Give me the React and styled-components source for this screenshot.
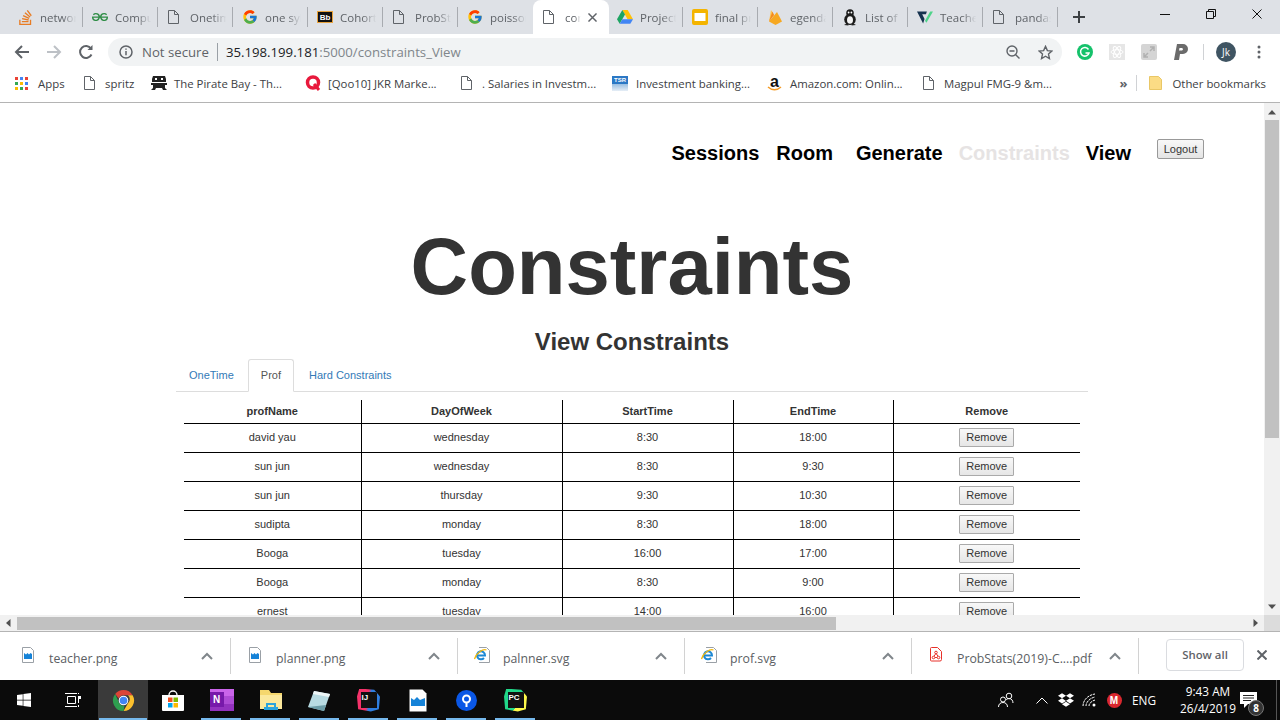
import React from "react";
import styled, { createGlobalStyle } from "styled-components";
import { FaWindows, FaDropbox } from "react-icons/fa";
import { FcGoogle } from "react-icons/fc";
import { SiStackoverflow, SiGeeksforgeeks } from "react-icons/si";

const GlobalStyle = createGlobalStyle`
  html, body {
    margin: 0;
    padding: 0;
    height: 720px;
    overflow: hidden;
    background: #fff;
    font-family: "Open Sans", "Noto Sans", sans-serif;
  }
  * { box-sizing: border-box; }
`;

const Screen = styled.div`
  width: 1280px;
  height: 720px;
  display: flex;
  flex-direction: column;
  overflow: hidden;
`;

/* ---------- browser chrome ---------- */

const TabStrip = styled.div`
  height: 34px;
  flex: none;
  background: #dee1e6;
  display: flex;
  padding-left: 8px;
`;

const Tab = styled.div`
  position: relative;
  width: ${props => (props.$active ? 76 : 75)}px;
  flex: none;
  display: flex;
  align-items: center;
  gap: 7px;
  padding-left: 9px;
  background: ${props => (props.$active ? "#fff" : "transparent")};
  border-radius: 8px 8px 0 0;
  margin-right: ${props => (props.$active ? -1 : 0)}px;
  z-index: ${props => (props.$active ? 1 : 0)};
  &::after {
    content: "";
    display: ${props => (props.$noSep ? "none" : "block")};
    position: absolute;
    right: 0;
    top: 7px;
    height: 20px;
    width: 1px;
    background: #a8abb0;
  }
`;

const TabIcon = styled.span`
  width: 16px;
  height: 16px;
  flex: none;
  display: flex;
  align-items: center;
  justify-content: center;
`;

const TabTitle = styled.span`
  width: ${props => (props.$active ? 16 : 37)}px;
  flex: none;
  overflow: hidden;
  white-space: nowrap;
  font-size: 11.5px;
  color: #5f6368;
  -webkit-mask-image: linear-gradient(to right, #000 60%, transparent 98%);
  mask-image: linear-gradient(to right, #000 60%, transparent 98%);
`;

const TabClose = styled.span`
  display: flex;
`;

const NewTab = styled.div`
  width: 28px;
  margin-left: 7px;
  display: flex;
  align-items: center;
  justify-content: center;
`;

const WindowControls = styled.div`
  margin-left: auto;
  display: flex;
`;

const WindowButton = styled.div`
  width: 46px;
  height: 28px;
  display: flex;
  align-items: center;
  justify-content: center;
`;

const Toolbar = styled.div`
  height: 36px;
  flex: none;
  background: #fff;
  display: flex;
  align-items: center;
  padding: 0 5px 0 6px;
`;

const ToolButton = styled.div`
  width: 32px;
  height: 32px;
  flex: none;
  display: flex;
  align-items: center;
  justify-content: center;
  margin-left: ${props => props.$ml || 0}px;
`;

const Omnibox = styled.div`
  flex: 1;
  height: 28px;
  margin: 0 7px 0 6px;
  border-radius: 14px;
  background: #f1f3f4;
  display: flex;
  align-items: center;
  padding-left: 11px;
  font-size: 13.2px;
`;

const NotSecure = styled.span`
  margin-left: 9px;
  color: #5f6368;
`;

const OmniDivider = styled.span`
  width: 1px;
  height: 18px;
  background: #9aa0a6;
  margin: 0 8px;
`;

const Host = styled.span`
  color: #202124;
`;

const UrlRest = styled.span`
  color: #80868b;
`;

const OmniRight = styled.div`
  margin-left: auto;
  padding-right: 1px;
  display: flex;
  align-items: center;
`;

const ToolDivider = styled.span`
  width: 1px;
  height: 16px;
  background: #d0d2d5;
  margin: 0 6px;
  flex: none;
`;

const Avatar = styled.div`
  width: 20px;
  height: 20px;
  border-radius: 50%;
  background: #3f5462;
  color: #fff;
  font-size: 10px;
  display: flex;
  align-items: center;
  justify-content: center;
`;

const BookmarkBar = styled.div`
  height: 33px;
  flex: none;
  background: #fff;
  border-bottom: 1px solid #b4b4b4;
  display: flex;
  align-items: center;
  padding: 0 0 6px 15px;
  font-size: 11.4px;
  color: #3c4043;
`;

const Bookmark = styled.div`
  width: ${props => props.$w}px;
  flex: none;
  display: flex;
  align-items: center;
  gap: ${props => props.$gap}px;
  white-space: nowrap;
`;

const BookmarkEnd = styled.div`
  margin-left: auto;
  display: flex;
  align-items: center;
  padding-right: 14px;
`;

const Chevrons = styled.span`
  font-size: 13px;
  color: #5f6368;
  font-weight: 700;
`;

const EndDivider = styled.span`
  width: 1px;
  height: 16px;
  background: #d0d2d5;
  margin: 0 12px 0 9px;
`;

const OtherLabel = styled.span`
  margin-left: 10px;
`;

/* ---------- page ---------- */

const Viewport = styled.div`
  height: 512px;
  flex: none;
  display: flex;
`;

const Page = styled.div`
  flex: 1;
  min-width: 0;
  overflow: hidden;
  background: #fff;
  font-family: "Liberation Sans", Arial, sans-serif;
  color: #333;
`;

const Header = styled.div`
  display: flex;
  justify-content: flex-end;
  padding: 36px 60px 0 0;
`;

const NavLink = styled.a`
  font-size: 20px;
  font-weight: 700;
  line-height: 28px;
  margin: 0 ${props => props.$gap || 16}px 0 0;
  color: ${props => (props.$current ? "#e6e3e3" : "#000")};
`;

const LogoutButton = styled.button`
  width: 47px;
  height: 20px;
  margin-left: 10px;
  padding: 0;
  font: 11px "Liberation Sans", Arial, sans-serif;
  color: #333;
  border: 1px solid #999;
  border-radius: 2px;
  background: linear-gradient(#f8f8f8, #e4e4e4);
`;

const Title = styled.h1`
  margin: 56px 0 0;
  font-size: 79.7px;
  line-height: 88px;
  font-weight: 700;
  text-align: center;
`;

const SubTitle = styled.h2`
  margin: 18px 0 0;
  font-size: 24px;
  line-height: 26px;
  font-weight: 700;
  text-align: center;
`;

const Content = styled.div`
  width: 912px;
  margin: 0 auto;
`;

const TabsRow = styled.div`
  display: flex;
  margin-top: 4px;
  border-bottom: 1px solid #ddd;
  height: 33px;
`;

const PageTab = styled.a`
  height: 33px;
  padding: 0 12px;
  margin: 0 ${props => props.$mr || 0}px 0 0;
  font-size: 11px;
  line-height: 31px;
  color: ${props => (props.$active ? "#555" : "#337ab7")};
  border: 1px solid ${props => (props.$active ? "#ddd" : "transparent")};
  border-bottom-color: ${props => (props.$active ? "#fff" : "transparent")};
  border-radius: 3px 3px 0 0;
  background: ${props => (props.$active ? "#fff" : "transparent")};
`;

const Table = styled.table`
  width: 896px;
  margin: 8px 8px 0;
  border-collapse: collapse;
  table-layout: fixed;
  font-size: 11px;
`;

const Th = styled.th`
  height: 23px;
  padding: 0;
  font-weight: 700;
  text-align: center;
  border-bottom: 1px solid #000;
  border-left: 1px solid #000;
  &:first-child { border-left: 0; }
`;

const Td = styled.td`
  height: 29px;
  padding: 0 0 1px;
  text-align: center;
  border-bottom: 1px solid #000;
  border-left: 1px solid #000;
  &:first-child { border-left: 0; }
`;

const RemoveButton = styled.button`
  display: block;
  width: 55px;
  height: 19px;
  margin: 0 auto;
  padding: 0;
  font: 11px "Liberation Sans", Arial, sans-serif;
  color: #333;
  border: 1px solid #aaa;
  border-radius: 1px;
  background: linear-gradient(#f8f8f8, #e6e6e6);
`;

const VBar = styled.div`
  width: 16px;
  flex: none;
  background: #f1f1f1;
  display: flex;
  flex-direction: column;
  align-items: center;
`;

const ArrowCell = styled.div`
  width: 16px;
  height: ${props => props.$h || 17}px;
  flex: none;
  display: flex;
  align-items: center;
  justify-content: center;
  margin-top: ${props => (props.$bottom ? "auto" : 0)};
  margin-left: ${props => (props.$right ? "auto" : 0)};
`;

const VThumb = styled.div`
  width: 14px;
  height: 318px;
  background: #c1c1c1;
`;

const HBar = styled.div`
  height: 16px;
  flex: none;
  background: #f1f1f1;
  display: flex;
  align-items: center;
`;

const HThumb = styled.div`
  width: 819px;
  height: 13px;
  margin-left: 1px;
  background: #c1c1c1;
`;

const Corner = styled.div`
  width: 16px;
  height: 16px;
  background: #dcdcdc;
`;

/* ---------- downloads ---------- */

const DownloadBar = styled.div`
  height: 49px;
  flex: none;
  background: #fff;
  border-top: 1px solid #b4b4b4;
  display: flex;
  align-items: center;
`;

const Download = styled.div`
  position: relative;
  width: ${props => props.$w || 227}px;
  height: 36px;
  flex: none;
  display: flex;
  align-items: center;
  border-right: 1px solid #d2d2d2;
  padding: 4px 0 0 ${props => props.$pad || 18}px;
`;

const FileIcon = styled.span`
  width: 14px;
  height: 16px;
  flex: none;
  margin: -6px 13px 0 0;
  display: flex;
`;

const FileName = styled.span`
  font-size: 12.3px;
  color: #5b5e63;
  white-space: nowrap;
`;

const Caret = styled.span`
  position: absolute;
  right: 15px;
  top: 10px;
  display: flex;
`;

const ShowAll = styled.div`
  width: 78px;
  height: 32px;
  margin: -3px 0 0 27px;
  flex: none;
  border: 1px solid #dadce0;
  border-radius: 4px;
  font-size: 11.4px;
  font-weight: 600;
  color: #5f6368;
  display: flex;
  align-items: center;
  justify-content: center;
`;

const CloseBar = styled.span`
  margin: -2px 0 0 13px;
  display: flex;
`;

/* ---------- taskbar ---------- */

const Taskbar = styled.div`
  height: 40px;
  flex: none;
  background: #0b0b0b;
  display: flex;
  color: #fff;
`;

const TaskItem = styled.div`
  position: relative;
  width: ${props => props.$w || 49}px;
  flex: none;
  display: flex;
  align-items: center;
  justify-content: center;
  background: ${props => (props.$active ? "#3a3a3a" : "transparent")};
  &::after {
    content: "";
    display: ${props => (props.$open ? "block" : "none")};
    position: absolute;
    left: ${props => (props.$active ? 1 : 4)}px;
    right: ${props => (props.$active ? 1 : 5)}px;
    bottom: 0;
    height: 2px;
    background: #76b9ed;
  }
`;

const Tray = styled.div`
  margin-left: auto;
  display: flex;
  align-items: center;
  font-size: 11.8px;
  padding-right: 3px;
`;

const TrayIcon = styled.span`
  display: flex;
  align-items: center;
  justify-content: center;
  width: ${props => props.$w || 24}px;
  margin-right: ${props => props.$mr || 0}px;
`;

const Clock = styled.div`
  width: 60px;
  margin-left: 16px;
  text-align: center;
  line-height: 17px;
  white-space: nowrap;
`;

const Notify = styled.div`
  position: relative;
  align-self: stretch;
  width: 38px;
  padding: 12px 0 0 2px;
`;

const NotifyBadge = styled.span`
  position: absolute;
  left: 10px;
  top: 20px;
  width: 16px;
  height: 16px;
  border-radius: 50%;
  background: #333;
  border: 1px solid #777;
  font-size: 10px;
  font-weight: 700;
  display: flex;
  align-items: center;
  justify-content: center;
`;

const ShowDesktop = styled.span`
  width: 1px;
  height: 40px;
  background: #555;
`;

/* ---------- icons ---------- */

const DocGlyph = styled.svg`
  flex: none;
  margin-left: ${props => props.$nudge || 0}px;
`;

const Doc = ({ nudge }) => (
  <DocGlyph $nudge={nudge} width="11" height="14" viewBox="0 0 11 14" fill="none" stroke="#5f6368">
    <path d="M.5.500h6l4 4v9H.5z M6.500.500V4.500H10.500" />
  </DocGlyph>
);

const Bb = styled.span`
  width: 16px;
  height: 12px;
  background: #111;
  border: 1px solid #e8a33d;
  color: #fff;
  font: 700 8px "Liberation Sans", sans-serif;
  display: flex;
  align-items: center;
  justify-content: center;
`;

const Drive = () => (
  <svg width="16" height="16" viewBox="0 0 16 14">
    <path d="M5.300 0h5.400l5.300 9.200h-5.400z" fill="#ffc107" />
    <path d="M5.300 0L0 9.200l2.700 4.600L8 4.600z" fill="#1da462" />
    <path d="M5.300 9.200H16l-2.700 4.600H2.700z" fill="#4285f4" />
  </svg>
);

const Slides = () => (
  <svg width="16" height="16" viewBox="0 0 16 16">
    <rect width="16" height="16" rx="2" fill="#f4b400" />
    <rect x="2.500" y="4" width="11" height="8" fill="#fff" />
  </svg>
);

const Firebase = () => (
  <svg width="13" height="16" viewBox="0 0 13 16">
    <path d="M0 12.500L2 1l3 5z" fill="#ffc24a" />
    <path d="M0 12.500L8 3l5 9.500-6.500 3.500z" fill="#f6a821" />
    <path d="M0 12.500L5 6 3.500 2.500z" fill="#f58a1f" />
  </svg>
);

const Penguin = () => (
  <svg width="14" height="17" viewBox="0 0 14 17">
    <circle cx="7" cy="4" r="3.800" fill="#1b1b1b" />
    <ellipse cx="7" cy="10.500" rx="5.800" ry="5.500" fill="#1b1b1b" />
    <ellipse cx="7" cy="11" rx="3" ry="3.800" fill="#f3f3f3" />
    <circle cx="5.600" cy="3.500" r=".9" fill="#fff" />
    <circle cx="8.400" cy="3.500" r=".9" fill="#fff" />
    <path d="M1 16l3.500-2 1 2.500zM13 16l-3.500-2-1 2.500z" fill="#222" />
  </svg>
);

const Teachable = () => (
  <svg width="17" height="15" viewBox="0 0 17 15">
    <path d="M0 1h10.500L9.500 4H5.500l2.500 5-1.500 5z" fill="#16324f" />
    <path d="M8.500 11L14 1h3L10 13z" fill="#4fd48a" />
  </svg>
);

const AppsGrid = () => (
  <svg width="13" height="13" viewBox="0 0 13 13">
    {[0, 5, 10].flatMap((y, r) =>
      [0, 5, 10].map((x, c) => (
        <rect
          key={`${r}${c}`}
          x={x}
          y={y}
          width="3"
          height="3"
          fill={[["#ea4335", "#4285f4", "#ea4335"], ["#34a853", "#fbbc05", "#4285f4"], ["#fbbc05", "#34a853", "#ea4335"]][r][c]}
        />
      ))
    )}
  </svg>
);

const Pirate = () => (
  <svg width="16" height="14" viewBox="0 0 16 14" fill="#222">
    <path d="M2 0h12l1 3v3H1V3z" />
    <path d="M0 7h16v2h-2v3l2 2h-4l-1-2H5l-1 2H0l2-2V9H0z" />
    <rect x="4" y="2" width="2" height="2" fill="#fff" />
    <rect x="10" y="2" width="2" height="2" fill="#fff" />
  </svg>
);

const Qoo = () => (
  <svg width="16" height="16" viewBox="0 0 16 16" fill="none">
    <circle cx="8" cy="7.500" r="5.500" stroke="#e8193c" strokeWidth="3.500" />
    <path d="M9 9l5 6" stroke="#e8193c" strokeWidth="3" />
  </svg>
);

const Tsr = styled.span`
  width: 16px;
  height: 15px;
  flex: none;
  background: linear-gradient(#2b78c5 55%, #9cc0e2 55%, #e6eef6);
  color: #fff;
  font: 700 6px "Liberation Sans", sans-serif;
  text-align: center;
  line-height: 8px;
`;

const AmazonBox = styled.span`
  position: relative;
  width: 15px;
  height: 16px;
  flex: none;
  color: #111;
  font: 700 16px/13px "Liberation Sans", sans-serif;
  text-align: center;
`;

const AmazonSmile = styled.svg`
  position: absolute;
  left: 0;
  bottom: 0;
`;

const AmazonIcon = () => (
  <AmazonBox>
    a
    <AmazonSmile width="15" height="5" viewBox="0 0 15 5" fill="none" stroke="#f59a23" strokeWidth="1.500">
      <path d="M1 1c4 3.500 9 3.500 13 0" />
    </AmazonSmile>
  </AmazonBox>
);

const Folder = () => (
  <svg width="13" height="14" viewBox="0 0 13 14">
    <path d="M.5.500h9l3 3v10H.5z" fill="#fbdc85" stroke="#e9c766" />
  </svg>
);

const CaretUp = () => (
  <svg width="16" height="16" viewBox="0 0 16 16" fill="none" stroke="#80868b" strokeWidth="2">
    <path d="M3 11l5-5 5 5" />
  </svg>
);

const Cross = ({ size = 10, color = "#5f6368", width = 1.600 }) => (
  <svg width={size} height={size} viewBox="0 0 10 10" stroke={color} strokeWidth={width}>
    <path d="M.5.500l9 9M9.500.500l-9 9" />
  </svg>
);

const PngIcon = () => (
  <svg width="12" height="16" viewBox="0 0 12 16">
    <path d="M.5.500h8l3 3v12H.5z" fill="#fff" stroke="#9aa0a6" />
    <rect x="2" y="4" width="8" height="8" fill="#1683d8" />
    <path d="M2 6l2 1.500L5.500 6 7 7.500 8.500 6 10 7V4H2z" fill="#fff" />
  </svg>
);

const SvgGlyph = styled.svg`
  flex: none;
  margin-left: -2px;
`;

const SvgIcon = () => (
  <SvgGlyph width="16" height="16" viewBox="0 0 16 16" fill="none">
    <path d="M5 .500h7.500l3 3v12H5" fill="#fff" stroke="#9aa0a6" />
    <path d="M3.500 8.500h7.500A4 4 0 1 0 10 11" stroke="#1c88d4" strokeWidth="2" />
    <path d="M.5 12C2 6 9 1.500 12.500 3" stroke="#f2b90f" strokeWidth="1.200" />
  </SvgGlyph>
);

const PdfIcon = () => (
  <svg width="12" height="15" viewBox="0 0 12 15" fill="none" stroke="#e8312a" strokeWidth="1">
    <path d="M1.500.500h6l4 4v8a1.500 1.500 0 0 1-1.500 1.500H1.500A1 1 0 0 1 .5 13V1.500a1 1 0 0 1 1-1z" />
    <circle cx="6" cy="5.500" r="1.300" />
    <circle cx="3.500" cy="10.500" r="1.300" />
    <circle cx="8.500" cy="10.500" r="1.300" />
    <path d="M5.500 7l-1.500 2.300M6.500 7L8 9.300M5 10.500h2" />
  </svg>
);

const ChromeLogo = () => (
  <svg width="23" height="23" viewBox="0 0 24 24">
    <path d="M12 1a11 11 0 0 1 9.530 5.500H12a5.500 5.500 0 0 0-5 3.300L3.300 5.300A11 11 0 0 1 12 1z" fill="#db4437" />
    <path d="M21.530 6.500A11 11 0 0 1 12 23l4.700-8.200a5.500 5.500 0 0 0 0-8.300z" fill="#fbc02d" />
    <path d="M3.300 5.300L7.600 14.800a5.500 5.500 0 0 0 5.400 2.600L12 23A11 11 0 0 1 3.300 5.300z" fill="#2e9e4f" />
    <circle cx="12" cy="12" r="5" fill="#fff" />
    <circle cx="12" cy="12" r="4" fill="#4285f4" />
  </svg>
);

const StoreIcon = () => (
  <svg width="24" height="24" viewBox="0 0 24 24">
    <path d="M8 7a4 4 0 0 1 8 0" fill="none" stroke="#fff" strokeWidth="1.300" />
    <path d="M1 7h22v15a1 1 0 0 1-1 1H2a1 1 0 0 1-1-1z" fill="#fff" />
    <rect x="7" y="9.500" width="4.500" height="4.500" fill="#f25022" />
    <rect x="12.500" y="9.500" width="4.500" height="4.500" fill="#7fba00" />
    <rect x="7" y="15" width="4.500" height="4.500" fill="#00a4ef" />
    <rect x="12.500" y="15" width="4.500" height="4.500" fill="#ffb900" />
  </svg>
);

const OneNoteBox = styled.span`
  position: relative;
  width: 24px;
  height: 22px;
  display: flex;
  background: linear-gradient(#ca64ea 33%, #ae4bd5 33% 66%, #9332bf 66%);
`;

const OneNoteN = styled.span`
  position: absolute;
  left: 0;
  top: 3px;
  width: 14px;
  height: 15px;
  background: #7719aa;
  color: #fff;
  font: 700 10px "Liberation Sans", sans-serif;
  display: flex;
  align-items: center;
  justify-content: center;
`;

const Explorer = () => (
  <svg width="24" height="20" viewBox="0 0 24 20">
    <path d="M1 0h9l2 3h11v16H1z" fill="#f5d76e" />
    <path d="M1 5h22v14H1z" fill="#fbe89c" />
    <path d="M7 17v-4h10v4h-2v-2H9v2z" fill="#2ba4dd" />
    <rect x="5" y="17" width="14" height="3" fill="#2ba4dd" />
  </svg>
);

const Notes = () => (
  <svg width="24" height="24" viewBox="0 0 24 24">
    <path d="M6 3l16 3-6 17-16-4z" fill="#b8dbe2" />
    <path d="M6 3l16 3-1 3L5 6z" fill="#eef6f7" />
    <path d="M0 19l16 4 2-6z" fill="#6c9da8" />
  </svg>
);

const IdeBox = styled.span`
  width: 23px;
  height: 23px;
  display: flex;
  align-items: center;
  justify-content: center;
  background: ${props => props.$bg};
  clip-path: polygon(10% 0, 75% 5%, 100% 35%, 95% 90%, 60% 100%, 5% 90%, 0 35%);
`;

const IdeCore = styled.span`
  width: 16px;
  height: 16px;
  background: #111;
  color: #fff;
  font: 700 8px "Liberation Sans", sans-serif;
  padding: 1px;
  line-height: 9px;
`;

const PreviewIcon = () => (
  <svg width="18" height="23" viewBox="0 0 18 23">
    <path d="M.5.500h13l4 4v18H.5z" fill="#fff" />
    <rect x="2" y="6" width="14" height="11" fill="#1683d8" />
    <path d="M2 9l3 2 3-3 3 3 5-2V6H2z" fill="#fff" />
  </svg>
);

const SourceTree = () => (
  <svg width="21" height="21" viewBox="0 0 21 21">
    <circle cx="10.500" cy="10.500" r="10.500" fill="#0a57e6" />
    <circle cx="10.500" cy="9" r="3.500" fill="none" stroke="#fff" strokeWidth="2" />
    <rect x="9.500" y="12" width="2" height="5" fill="#fff" />
  </svg>
);

const TaskViewIcon = () => (
  <svg width="16" height="14" viewBox="0 0 16 14" fill="none" stroke="#fff" strokeWidth="1">
    <path d="M2.500 3.500h8v7h-8zM0 .5h12M0 13.500h12M13.500 0v1M13.500 3v7M13.500 12v2" />
    <rect x="13" y="3" width="3" height="3" fill="#fff" stroke="none" />
  </svg>
);

const People = () => (
  <svg width="16" height="16" viewBox="0 0 16 16" fill="none" stroke="#fff" strokeWidth="1">
    <circle cx="5" cy="7.500" r="2.500" />
    <circle cx="11" cy="4" r="2.800" />
    <path d="M.5 15c0-3 2-4.500 4.500-4.500S9.500 12 9.500 15M8 8c1-1 2-1.500 3-1.500 2.500 0 4 2 4 4.500" />
  </svg>
);

const Wifi = () => (
  <svg width="16" height="14" viewBox="0 0 16 14" fill="none" stroke="#fff" strokeWidth="1">
    <path d="M1 13C1 7 6 2 13 1M4 13c0-4 4-8 9-9M7 13c0-3 3-5 6-6" strokeDasharray="2.500 .8" />
    <circle cx="12" cy="12" r="1.500" fill="#fff" stroke="none" />
  </svg>
);

const MegaBadge = styled.span`
  width: 15px;
  height: 15px;
  border-radius: 50%;
  background: #d9272e;
  color: #fff;
  font: 700 10px "Liberation Sans", sans-serif;
  display: flex;
  align-items: center;
  justify-content: center;
`;

const Bubble = () => (
  <svg width="17" height="16" viewBox="0 0 17 16">
    <path d="M0 0h17v12H8l-4 4v-4H0z" fill="#fff" />
    <path d="M3 3.500h11M3 6h11M3 8.500h8" stroke="#222" />
  </svg>
);

const Arrow = ({ d }) => (
  <svg width="8" height="8" viewBox="0 0 8 8" fill="#505050">
    <path d={d} />
  </svg>
);

/* ---------- data ---------- */

const tabs = [
  { icon: <SiStackoverflow size={15} color="#e87c24" />, title: "network" },
  { icon: <SiGeeksforgeeks size={16} color="#2f8d46" />, title: "Computer" },
  { icon: <Doc nudge={-3} />, title: "Onetime" },
  { icon: <FcGoogle size={16} />, title: "one syllabus" },
  { icon: <Bb>Bb</Bb>, title: "Cohort" },
  { icon: <Doc nudge={-3} />, title: "ProbStats" },
  { icon: <FcGoogle size={16} />, title: "poisson", noSep: true },
  { icon: <Doc nudge={-3} />, title: "constraints", active: true, noSep: true },
  { icon: <Drive />, title: "Project" },
  { icon: <Slides />, title: "final project" },
  { icon: <Firebase />, title: "egendary" },
  { icon: <Penguin />, title: "List of" },
  { icon: <Teachable />, title: "Teacher" },
  { icon: <Doc nudge={-3} />, title: "pandas" },
];

const bookmarks = [
  { w: 69, gap: 10, icon: <AppsGrid />, label: "Apps" },
  { w: 67, gap: 10, icon: <Doc />, label: "spritz" },
  { w: 154, gap: 7, icon: <Pirate />, label: "The Pirate Bay - Th..." },
  { w: 156, gap: 7, icon: <Qoo />, label: "[Qoo10] JKR Marke..." },
  { w: 151, gap: 10, icon: <Doc />, label: ". Salaries in Investm..." },
  { w: 155, gap: 8, icon: <Tsr>TSR</Tsr>, label: "Investment banking..." },
  { w: 156, gap: 8, icon: <AmazonIcon />, label: "Amazon.com: Onlin..." },
  { w: 160, gap: 10, icon: <Doc />, label: "Magpul FMG-9 &m..." },
];

const rows = [
  ["david yau", "wednesday", "8:30", "18:00"],
  ["sun jun", "wednesday", "8:30", "9:30"],
  ["sun jun", "thursday", "9:30", "10:30"],
  ["sudipta", "monday", "8:30", "18:00"],
  ["Booga", "tuesday", "16:00", "17:00"],
  ["Booga", "monday", "8:30", "9:00"],
  ["ernest", "tuesday", "14:00", "16:00"],
];

const downloads = [
  { icon: <PngIcon />, name: "teacher.png", w: 231, pad: 22 },
  { icon: <PngIcon />, name: "planner.png" },
  { icon: <SvgIcon />, name: "palnner.svg" },
  { icon: <SvgIcon />, name: "prof.svg" },
  { icon: <PdfIcon />, name: "ProbStats(2019)-C....pdf" },
];

const App = () => (
  <Screen>
    <GlobalStyle />
    <TabStrip>
      {tabs.map(tab => (
        <Tab key={tab.title} $active={tab.active} $noSep={tab.noSep}>
          <TabIcon>{tab.icon}</TabIcon>
          <TabTitle $active={tab.active}>{tab.title}</TabTitle>
          {tab.active && (
            <TabClose>
              <Cross size={9} />
            </TabClose>
          )}
        </Tab>
      ))}
      <NewTab>
        <svg width="12" height="12" viewBox="0 0 12 12" stroke="#3c4043" strokeWidth="2">
          <path d="M6 0v12M0 6h12" />
        </svg>
      </NewTab>
      <WindowControls>
        <WindowButton>
          <svg width="10" height="1"><rect width="10" height="1" fill="#111" /></svg>
        </WindowButton>
        <WindowButton>
          <svg width="10" height="10" viewBox="0 0 10 10" fill="none" stroke="#111">
            <path d="M.5 2.500h7v7h-7zM2.500 2.500v-2h7v7h-2" />
          </svg>
        </WindowButton>
        <WindowButton>
          <Cross size={10} color="#111" width={1} />
        </WindowButton>
      </WindowControls>
    </TabStrip>

    <Toolbar>
      <ToolButton>
        <svg width="16" height="16" viewBox="0 0 16 16" fill="none" stroke="#5f6368" strokeWidth="2">
          <path d="M15 8H2M8 2L2 8l6 6" />
        </svg>
      </ToolButton>
      <ToolButton>
        <svg width="16" height="16" viewBox="0 0 16 16" fill="none" stroke="#bdc1c6" strokeWidth="2">
          <path d="M1 8h13M8 2l6 6-6 6" />
        </svg>
      </ToolButton>
      <ToolButton>
        <svg width="16" height="16" viewBox="0 0 16 16" fill="none" stroke="#5f6368" strokeWidth="2">
          <path d="M13.500 10.500A6 6 0 1 1 13 4.500" />
          <path d="M14.500 1v5h-5z" fill="#5f6368" stroke="none" />
        </svg>
      </ToolButton>
      <Omnibox>
        <svg width="14" height="14" viewBox="0 0 14 14" fill="none" stroke="#5f6368" strokeWidth="1.500">
          <circle cx="7" cy="7" r="6" />
          <path d="M7 6v4.200M7 3.500v1.300" />
        </svg>
        <NotSecure>Not secure</NotSecure>
        <OmniDivider />
        <Host>35.198.199.181</Host>
        <UrlRest>:5000/constraints_View</UrlRest>
        <OmniRight>
          <ToolButton>
            <svg width="14" height="14" viewBox="0 0 14 14" fill="none" stroke="#5f6368" strokeWidth="1.400">
              <circle cx="6" cy="6" r="5" />
              <path d="M3.500 6h5M9.500 9.500l4 4" />
            </svg>
          </ToolButton>
          <ToolButton>
            <svg width="15" height="15" viewBox="0 0 16 16" fill="none" stroke="#5f6368" strokeWidth="1.500">
              <path d="M8 1.500l2 4.500 4.800.5-3.600 3.200 1 4.800L8 12l-4.200 2.500 1-4.800L1.200 6.500 6 6z" />
            </svg>
          </ToolButton>
        </OmniRight>
      </Omnibox>
      <ToolButton>
        <svg width="16" height="16" viewBox="0 0 16 16">
          <circle cx="8" cy="8" r="8" fill="#15c26b" />
          <path d="M11.500 5.500A4.300 4.300 0 1 0 12 9H8.500" fill="none" stroke="#fff" strokeWidth="1.500" />
        </svg>
      </ToolButton>
      <ToolButton>
        <svg width="16" height="16" viewBox="0 0 16 16" fill="none" stroke="#fff">
          <rect width="16" height="16" fill="#e6e6e6" stroke="none" />
          <ellipse cx="8" cy="8" rx="6" ry="2.300" />
          <ellipse cx="8" cy="8" rx="6" ry="2.300" transform="rotate(60 8 8)" />
          <ellipse cx="8" cy="8" rx="6" ry="2.300" transform="rotate(120 8 8)" />
        </svg>
      </ToolButton>
      <ToolButton>
        <svg width="16" height="16" viewBox="0 0 16 16" fill="none" stroke="#b0b0b0" strokeWidth="1.500">
          <rect width="16" height="16" rx="2" fill="#d5d5d5" stroke="none" />
          <path d="M3 13l4-4M13 3L9 7M9 3h4v4M3 9v4h4" />
        </svg>
      </ToolButton>
      <ToolButton>
        <svg width="14" height="16" viewBox="0 0 14 16" fill="#6b6b6b">
          <path d="M3 0h6a5 5 0 0 1 0 10H6l-1 6H0zM5.500 4L5 6.500h3a1.300 1.300 0 0 0 0-2.500z" fillRule="evenodd" />
        </svg>
      </ToolButton>
      <ToolDivider />
      <ToolButton>
        <Avatar>Jk</Avatar>
      </ToolButton>
      <ToolButton $ml={1}>
        <svg width="4" height="14" viewBox="0 0 4 14" fill="#5f6368">
          <circle cx="2" cy="2" r="1.500" />
          <circle cx="2" cy="7" r="1.500" />
          <circle cx="2" cy="12" r="1.500" />
        </svg>
      </ToolButton>
    </Toolbar>

    <BookmarkBar>
      {bookmarks.map(item => (
        <Bookmark key={item.label} $w={item.w} $gap={item.gap}>
          {item.icon}
          <span>{item.label}</span>
        </Bookmark>
      ))}
      <BookmarkEnd>
        <Chevrons>»</Chevrons>
        <EndDivider />
        <Folder />
        <OtherLabel>Other bookmarks</OtherLabel>
      </BookmarkEnd>
    </BookmarkBar>

    <Viewport>
      <Page>
        <Header>
          <NavLink $gap={17}>Sessions</NavLink>
          <NavLink $gap={23}>Room</NavLink>
          <NavLink>Generate</NavLink>
          <NavLink $current>Constraints</NavLink>
          <NavLink>View</NavLink>
          <LogoutButton>Logout</LogoutButton>
        </Header>
        <Title>Constraints</Title>
        <SubTitle>View Constraints</SubTitle>
        <Content>
          <TabsRow>
            <PageTab $mr={1}>OneTime</PageTab>
            <PageTab $active $mr={2}>Prof</PageTab>
            <PageTab>Hard Constraints</PageTab>
          </TabsRow>
          <Table>
            <colgroup>
              <col width="177" />
              <col width="201" />
              <col width="171" />
              <col width="160" />
              <col width="187" />
            </colgroup>
            <thead>
              <tr>
                <Th>profName</Th>
                <Th>DayOfWeek</Th>
                <Th>StartTime</Th>
                <Th>EndTime</Th>
                <Th>Remove</Th>
              </tr>
            </thead>
            <tbody>
              {rows.map((row, i) => (
                <tr key={i}>
                  {row.map((cell, j) => (
                    <Td key={j}>{cell}</Td>
                  ))}
                  <Td>
                    <RemoveButton>Remove</RemoveButton>
                  </Td>
                </tr>
              ))}
            </tbody>
          </Table>
        </Content>
      </Page>
      <VBar>
        <ArrowCell>
          <Arrow d="M4 2l4 4.500H0z" />
        </ArrowCell>
        <VThumb />
        <ArrowCell $bottom>
          <Arrow d="M4 6L0 1.500h8z" />
        </ArrowCell>
      </VBar>
    </Viewport>

    <HBar>
      <ArrowCell $h={16}>
        <Arrow d="M2 4l4.500-4v8z" />
      </ArrowCell>
      <HThumb />
      <ArrowCell $h={16} $right>
        <Arrow d="M6 4L1.500 0v8z" />
      </ArrowCell>
      <Corner />
    </HBar>

    <DownloadBar>
      {downloads.map(item => (
        <Download key={item.name} $w={item.w} $pad={item.pad}>
          <FileIcon>{item.icon}</FileIcon>
          <FileName>{item.name}</FileName>
          <Caret>
            <CaretUp />
          </Caret>
        </Download>
      ))}
      <ShowAll>Show all</ShowAll>
      <CloseBar>
        <Cross size={10} width={2} />
      </CloseBar>
    </DownloadBar>

    <Taskbar>
      <TaskItem $w={48}>
        <FaWindows size={16} />
      </TaskItem>
      <TaskItem $w={50}>
        <TaskViewIcon />
      </TaskItem>
      <TaskItem $w={50} $active $open>
        <ChromeLogo />
      </TaskItem>
      <TaskItem>
        <StoreIcon />
      </TaskItem>
      <TaskItem $open>
        <OneNoteBox>
          <OneNoteN>N</OneNoteN>
        </OneNoteBox>
      </TaskItem>
      <TaskItem $open>
        <Explorer />
      </TaskItem>
      <TaskItem $open>
        <Notes />
      </TaskItem>
      <TaskItem $open>
        <IdeBox $bg="linear-gradient(100deg, #f5326a 45%, #2f7fe0 55%)">
          <IdeCore>IJ</IdeCore>
        </IdeBox>
      </TaskItem>
      <TaskItem $open>
        <PreviewIcon />
      </TaskItem>
      <TaskItem $open>
        <SourceTree />
      </TaskItem>
      <TaskItem $open>
        <IdeBox $bg="linear-gradient(120deg, #21d789 60%, #fcf84a 60%)">
          <IdeCore>PC</IdeCore>
        </IdeBox>
      </TaskItem>
      <Tray>
        <TrayIcon $mr={12}>
          <People />
        </TrayIcon>
        <TrayIcon>
          <svg width="12" height="7" viewBox="0 0 12 7" fill="none" stroke="#fff">
            <path d="M.5 6.500L6 1l5.500 5.500" />
          </svg>
        </TrayIcon>
        <TrayIcon>
          <FaDropbox size={16} />
        </TrayIcon>
        <TrayIcon>
          <Wifi />
        </TrayIcon>
        <TrayIcon>
          <MegaBadge>M</MegaBadge>
        </TrayIcon>
        <TrayIcon $w={36}>ENG</TrayIcon>
        <Clock>
          9:43 AM
          <br />
          26/4/2019
        </Clock>
        <Notify>
          <Bubble />
          <NotifyBadge>8</NotifyBadge>
        </Notify>
        <ShowDesktop />
      </Tray>
    </Taskbar>
  </Screen>
);

export default App;
